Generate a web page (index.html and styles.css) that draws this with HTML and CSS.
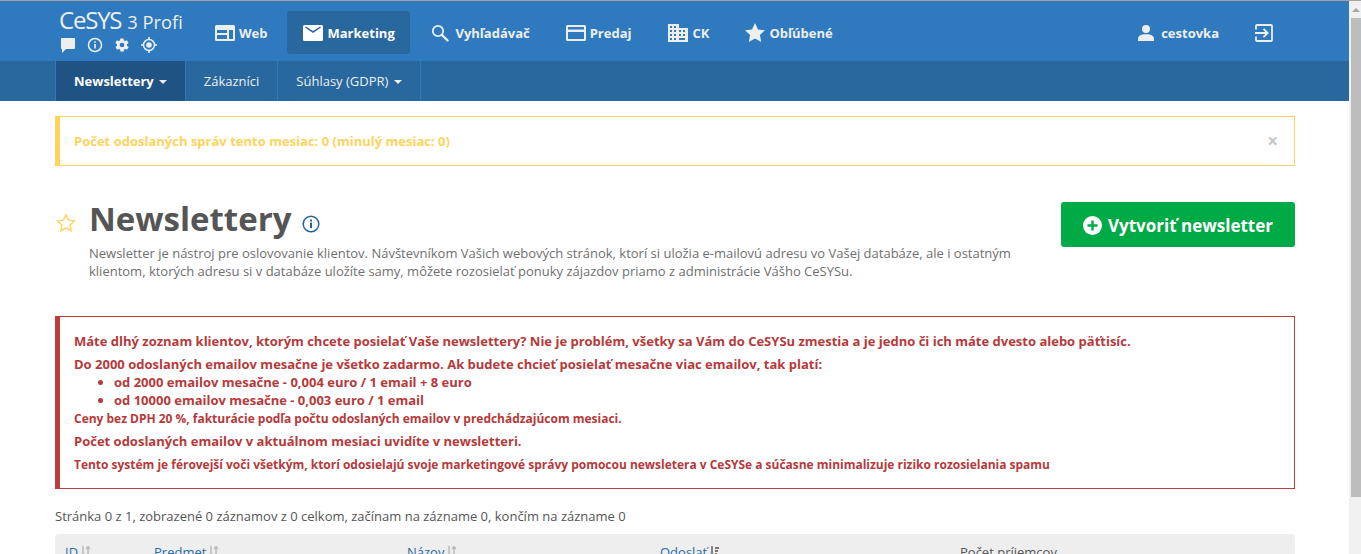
FILE: index.html
```html
<!DOCTYPE html>
<html lang="sk">
<head>
<meta charset="utf-8">
<title>Newslettery</title>
<link rel="stylesheet" href="styles.css">
</head>
<body>
<div class="window">
<div class="page">
  <header class="topbar">
    <div class="container topbar-in">
      <div class="brand">
        <div class="logo"><span class="logo-main">CeSYS</span><span class="logo-sub">3 Profi</span></div>
        <div class="brand-icons">
          <svg width="16" height="16" viewBox="0 0 16 16"><path fill="#eee" d="M2 1h12a1 1 0 0 1 1 1v9a1 1 0 0 1-1 1H6l-4 4v-4a1 1 0 0 1-1-1V2a1 1 0 0 1 1-1z"/></svg>
          <svg width="16" height="16" viewBox="0 0 16 16"><circle cx="8" cy="8" r="6.5" fill="none" stroke="#eee" stroke-width="1.5"/><rect x="7.2" y="7" width="1.6" height="4.5" fill="#eee"/><rect x="7.2" y="4.2" width="1.6" height="1.6" fill="#eee"/></svg>
          <svg width="16" height="16" viewBox="0 0 24 24"><path fill="#eee" d="M19.4 13c.1-.3.1-.7.1-1s0-.7-.1-1l2.100-1.600c.2-.2.2-.4.1-.6l-2-3.500c-.1-.2-.4-.3-.6-.2l-2.500 1c-.5-.4-1.100-.7-1.700-1l-.4-2.600c0-.2-.2-.4-.5-.4h-4c-.3 0-.5.2-.5.400l-.4 2.600c-.6.300-1.200.6-1.700 1l-2.500-1c-.2-.1-.5 0-.6.2l-2 3.500c-.1.200-.1.400.1.600L4.600 11c-.1.300-.1.700-.1 1s0 .7.1 1l-2.100 1.600c-.2.200-.2.400-.1.600l2 3.500c.1.200.4.300.6.200l2.500-1c.5.400 1.100.7 1.700 1l.4 2.600c0 .2.200.4.500.4h4c.3 0 .5-.2.5-.4l.4-2.600c.6-.3 1.200-.6 1.700-1l2.500 1c.2.100.5 0 .6-.2l2-3.500c.1-.2.100-.4-.1-.6L19.400 13zM12 15.500a3.500 3.500 0 1 1 0-7 3.500 3.500 0 0 1 0 7z"/></svg>
          <svg width="16" height="16" viewBox="0 0 16 16"><circle cx="8" cy="8" r="5.500" fill="none" stroke="#eee" stroke-width="1.500"/><circle cx="8" cy="8" r="2.800" fill="#eee"/><path stroke="#eee" stroke-width="1.500" d="M8 0v2.500M8 13.500V16M0 8h2.500M13.500 8H16"/></svg>
        </div>
      </div>
      <nav class="mainnav">
        <a class="nav-item nav-web"><svg class="nav-ico" width="20" height="16" viewBox="0 0 20 16"><path fill="#eee" fill-rule="evenodd" d="M1.500 0h17A1.500 1.500 0 0 1 20 1.500v13a1.500 1.500 0 0 1-1.500 1.500h-17A1.500 1.500 0 0 1 0 14.500v-13A1.500 1.500 0 0 1 1.500 0zM2 5v3h10V5H2zm0 5v4h10v-4H2zm12-5v9h4V5h-4z"/></svg>Web</a>
        <a class="nav-item nav-active"><svg class="nav-ico" width="20" height="16" viewBox="0 0 20 16"><path fill="#fff" fill-rule="evenodd" d="M1.500 0h17A1.500 1.500 0 0 1 20 1.500v13a1.500 1.500 0 0 1-1.500 1.500h-17A1.500 1.500 0 0 1 0 14.500v-13A1.500 1.500 0 0 1 1.500 0zM2 2.500L10 8l8-5.500-.9-.9L10 6 2.900 1.600z"/></svg>Marketing</a>
        <a class="nav-item nav-after"><svg class="nav-ico-s" width="18" height="18" viewBox="0 0 18 18"><circle cx="7" cy="7" r="5.200" fill="none" stroke="#eee" stroke-width="1.800"/><path stroke="#eee" stroke-width="2.400" stroke-linecap="round" d="M11 11l5.500 5.500"/></svg>Vyhľadávač</a>
        <a class="nav-item"><svg class="nav-ico" width="20" height="16" viewBox="0 0 20 16"><path fill="#eee" fill-rule="evenodd" d="M1.500 0h17A1.500 1.500 0 0 1 20 1.500v13a1.500 1.500 0 0 1-1.500 1.500h-17A1.500 1.500 0 0 1 0 14.500v-13A1.500 1.500 0 0 1 1.500 0zM2 2v2.500h16V2H2zm0 5v7h16V7H2z"/></svg>Predaj</a>
        <a class="nav-item"><svg class="nav-ico nav-ico-ck" width="20" height="18" viewBox="0 0 20 18"><path fill="#eee" fill-rule="evenodd" d="M0 0h11v4h9v14H0V0zm2 2v2h2V2H2zm4 0v2h2V2H6zM2 6v2h2V6H2zm4 0v2h2V6H6zm5 0v2h2V6h-2zm4 0v2h2V6h-2zM2 10v2h2v-2H2zm4 0v2h2v-2H6zm5 0v2h2v-2h-2zm4 0v2h2v-2h-2zM2 14v2h2v-2H2zm4 0v2h2v-2H6zm5 0v2h6v-2h-6z"/></svg>CK</a>
        <a class="nav-item"><svg class="nav-ico" width="20" height="19" viewBox="0 0 20 19"><path fill="#eee" d="M10 0l3 6.400 7 .9-5.100 4.800 1.300 6.900L10 15.600 3.800 19l1.300-6.900L0 7.300l7-.9z"/></svg>Obľúbené</a>
      </nav>
      <div class="usernav">
        <a class="nav-item nav-user"><svg class="nav-ico-u" width="16" height="16" viewBox="0 0 16 16"><circle cx="8" cy="4" r="4" fill="#eee"/><path fill="#eee" d="M0 16v-2.500C0 10.800 3.500 9.300 8 9.300s8 1.500 8 4.200V16z"/></svg>cestovka</a>
        <a class="logout"><svg width="18" height="18" viewBox="0 0 18 18"><path fill="none" stroke="#eee" stroke-width="1.800" d="M1 5.500V2a1 1 0 0 1 1-1h14a1 1 0 0 1 1 1v14a1 1 0 0 1-1 1H2a1 1 0 0 1-1-1v-3.500"/><path fill="none" stroke="#eee" stroke-width="1.800" d="M0 9h12M8.500 4.800L12.700 9l-4.200 4.200"/></svg></a>
      </div>
    </div>
  </header>
  <div class="subbar">
    <div class="container subbar-in">
      <a class="sub-item sub-active">Newslettery<span class="caret"></span></a>
      <a class="sub-item">Zákazníci</a>
      <a class="sub-item">Súhlasy (GDPR)<span class="caret caret-wide"></span></a>
    </div>
  </div>
  <main class="container content">
    <div class="alert-warn">
      <span>Počet odoslaných správ tento mesiac: 0 (minulý mesiac: 0)</span>
      <span class="close">×</span>
    </div>
    <section class="heading">
      <svg class="fav" width="20" height="19" viewBox="0 0 20 19"><path fill="none" stroke="#ffd35c" stroke-width="1.400" d="M10 1.800l2.500 5.300 5.800.8-4.200 4 1 5.700L10 14.800l-5.100 2.800 1-5.700-4.200-4 5.800-.8z"/></svg>
      <div class="heading-text">
        <h1>Newslettery<svg class="info" width="18" height="18" viewBox="0 0 18 18"><circle cx="9" cy="9" r="7.800" fill="none" stroke="#23639f" stroke-width="1.500"/><rect x="8" y="7.600" width="2" height="5.600" fill="#23639f"/><rect x="8" y="4.500" width="2" height="2" fill="#23639f"/></svg></h1>
        <p>Newsletter je nástroj pre oslovovanie klientov. Návštevníkom Vašich webových stránok, ktorí si uložia e-mailovú adresu vo Vašej databáze, ale i ostatným klientom, ktorých adresu si v databáze uložíte samy, môžete rozosielať ponuky zájazdov priamo z administrácie Vášho CeSYSu.</p>
      </div>
      <a class="btn-create"><svg width="19" height="19" viewBox="0 0 19 19"><circle cx="9.500" cy="9.500" r="9.500" fill="#fff"/><path stroke="#00aa46" stroke-width="2.400" d="M9.500 4.500v10M4.500 9.500h10"/></svg>Vytvoriť newsletter</a>
    </section>
    <section class="alert-danger">
      <p class="l1">Máte dlhý zoznam klientov, ktorým chcete posielať Vaše newslettery? Nie je problém, všetky sa Vám do CeSYSu zmestia a je jedno či ich máte dvesto alebo päťtisíc.</p>
      <p class="l2">Do 2000 odoslaných emailov mesačne je všetko zadarmo. Ak budete chcieť posielať mesačne viac emailov, tak platí:</p>
      <ul>
        <li>od 2000 emailov mesačne - 0,004 euro / 1 email + 8 euro</li>
        <li>od 10000 emailov mesačne - 0,003 euro / 1 email</li>
      </ul>
      <p class="small">Ceny bez DPH 20 %, fakturácie podľa počtu odoslaných emailov v predchádzajúcom mesiaci.</p>
      <p class="l3">Počet odoslaných emailov v aktuálnom mesiaci uvidíte v newsletteri.</p>
      <p class="small l4">Tento systém je férovejší voči všetkým, ktorí odosielajú svoje marketingové správy pomocou newsletera v CeSYSe a súčasne minimalizuje riziko rozosielania spamu</p>
    </section>
    <p class="pager">Stránka 0 z 1, zobrazené 0 záznamov z 0 celkom, začínam na zázname 0, končím na zázname 0</p>
    <div class="thead">
      <span class="th th-id"><a>ID</a><svg class="sort" width="9" height="12" viewBox="0 0 9 12"><path fill="none" stroke="#bcbcbc" stroke-width="1.500" d="M2 0v10M0 8l2 2.500L4 8M7 11V1M5 3l2-2.500L9 3"/></svg></span>
      <span class="th th-pr"><a>Predmet</a><svg class="sort" width="9" height="12" viewBox="0 0 9 12"><path fill="none" stroke="#bcbcbc" stroke-width="1.500" d="M2 0v10M0 8l2 2.500L4 8M7 11V1M5 3l2-2.500L9 3"/></svg></span>
      <span class="th th-na"><a>Názov</a><svg class="sort" width="9" height="12" viewBox="0 0 9 12"><path fill="none" stroke="#bcbcbc" stroke-width="1.500" d="M2 0v10M0 8l2 2.500L4 8M7 11V1M5 3l2-2.500L9 3"/></svg></span>
      <span class="th th-od"><a>Odoslať</a><svg class="sort" width="9" height="12" viewBox="0 0 9 12"><path fill="none" stroke="#666" stroke-width="1.500" d="M2 0v10M0 8l2 2.500L4 8"/><path fill="#777" d="M5 1h4v2H5zM5 4h3v2H5zM5 7h2v2H5z"/></svg></span>
      <span class="th th-po">Počet príjemcov</span>
    </div>
  </main>
</div>
<aside class="scrollbar">
  <div class="sb-btn"><span class="sb-arrow"></span></div>
  <div class="sb-thumb"></div>
</aside>
</div>
</body>
</html>
```

FILE: styles.css
```css
* { box-sizing: border-box; }
html, body { margin: 0; height: 100%; overflow: hidden; }
body { font-family: "Open Sans", "Liberation Sans", sans-serif; background: #fff; color: #555; }
a { text-decoration: none; color: inherit; }
p, h1, ul { margin: 0; padding: 0; }

.window { display: flex; height: 554px; border-top: 1px solid #a3a3a3; }
.page { flex: 1 1 auto; min-width: 0; overflow: hidden; }
.scrollbar { flex: 0 0 12px; background: #f0f0f0; padding-left: 2px; }
.sb-btn { height: 17px; display: flex; align-items: center; justify-content: center; }
.sb-arrow { width: 0; height: 0; border-left: 4px solid transparent; border-right: 4px solid transparent; border-bottom: 4px solid #a6a6a6; }
.sb-thumb { height: 479px; background: #bdbdbd; }

.container { width: 1240px; margin-left: 55px; }

.topbar { height: 60px; background: #2f7abf; }
.topbar-in { display: flex; align-items: stretch; height: 60px; }
.brand { width: 160px; padding: 5px 0 0 4px; color: #eee; }
.logo { display: flex; align-items: baseline; height: 27px; line-height: 28px; white-space: nowrap; }
.logo-main { font-size: 24px; letter-spacing: -1.200px; }
.logo-sub { margin-left: 6px; font-size: 18.300px; }
.brand-icons { display: flex; gap: 11px; margin: 4px 0 0 1px; }
.mainnav { display: flex; margin-top: 10px; height: 43px; margin-left: 0; }
.nav-item { display: flex; align-items: center; height: 43px; padding: 0 18px; border-radius: 3px; color: #eee; font-size: 13px; font-weight: 700; white-space: nowrap; }
.nav-web { padding: 0 20px 0 0; }
.nav-active { background: #28689f; color: #fff; width: 123px; padding: 0 16px; }
.nav-after { margin-left: 3px; }
.nav-ico { margin-right: 4px; flex: none; }
.nav-ico-s { margin-right: 6px; flex: none; }
.nav-ico-u { margin-right: 7px; flex: none; }
.nav-ico-ck { margin-right: 5px; }
.usernav { margin-left: auto; display: flex; align-items: flex-start; padding-top: 10px; margin-right: 22px; }
.nav-user { padding: 0; }
.logout { margin-left: 36px; margin-top: 13px; height: 18px; display: block; }

.subbar { height: 40px; background: #28689f; }
.subbar-in { display: flex; height: 40px; border-left: 1px solid #2f7abf; }
.sub-item { display: flex; align-items: center; padding: 0 18px; border-right: 1px solid #2f7abf; color: #eee; font-size: 13px; white-space: nowrap; }
.sub-active { background: #1f5383; color: #fff; font-weight: 700; }
.caret { width: 0; height: 0; margin-left: 5px; margin-top: 1px; border-left: 4px solid transparent; border-right: 4px solid transparent; border-top: 4px solid #eee; }
.caret-wide { margin-left: 6px; }

.content { padding-top: 15px; }
.alert-warn { display: flex; justify-content: space-between; align-items: center; height: 50px; padding: 0 16px 0 14px; border: 1px solid #ffd35c; border-left-width: 5px; color: #ffd35c; font-size: 13.020px; font-weight: 700; }
.close { color: #c8c8c8; font-size: 19px; font-weight: 700; line-height: 1; }

.heading { position: relative; display: flex; height: 150px; padding-top: 33px; }
.fav { margin: 14px 0 0 1px; flex: none; }
.heading-text { margin-left: 13px; width: 940px; }
h1 { display: flex; align-items: center; height: 42px; margin-top: -1px; font-size: 33px; font-weight: 700; line-height: 42px; color: #555; }
.info { margin: 9px 0 0 11px; }
.heading-text p { margin-top: 4px; font-size: 13px; line-height: 18px; color: #6f6f6f; }
.btn-create { position: absolute; right: 0; top: 36px; display: flex; align-items: center; justify-content: center; gap: 6px; width: 234px; height: 45px; padding-top: 1px; border-radius: 3px; background: #00aa46; color: #fff; font-size: 17px; font-weight: 700; white-space: nowrap; }

.alert-danger { height: 173px; padding: 15px 15px 0 14px; border: 1px solid #bd3c3c; border-left-width: 5px; color: #b53a3a; font-size: 13px; font-weight: 700; line-height: 18px; }
.alert-danger .l2 { margin-top: 5px; }
.alert-danger ul { margin: 0 0 0 40px; }
.alert-danger li { height: 18px; }
.alert-danger .small { padding-top: 1px; font-size: 11.975px; }
.alert-danger .l3 { margin-top: 4px; }
.alert-danger .l4 { margin-top: 5px; }

.pager { margin-top: 18px; font-size: 13px; line-height: 18px; color: #555; }
.thead { display: flex; height: 60px; margin-top: 9px; padding: 9px 10px 0; background: #eee; border-radius: 4px 4px 0 0; font-size: 13px; line-height: 18px; white-space: nowrap; }
.th a { color: #2a6ca8; }
.th { display: block; }
.th-id { width: 89px; }
.th-pr { width: 253px; }
.th-na { width: 253px; }
.th-od { width: 300px; }
.sort { margin-left: 3px; vertical-align: -1px; }
```
